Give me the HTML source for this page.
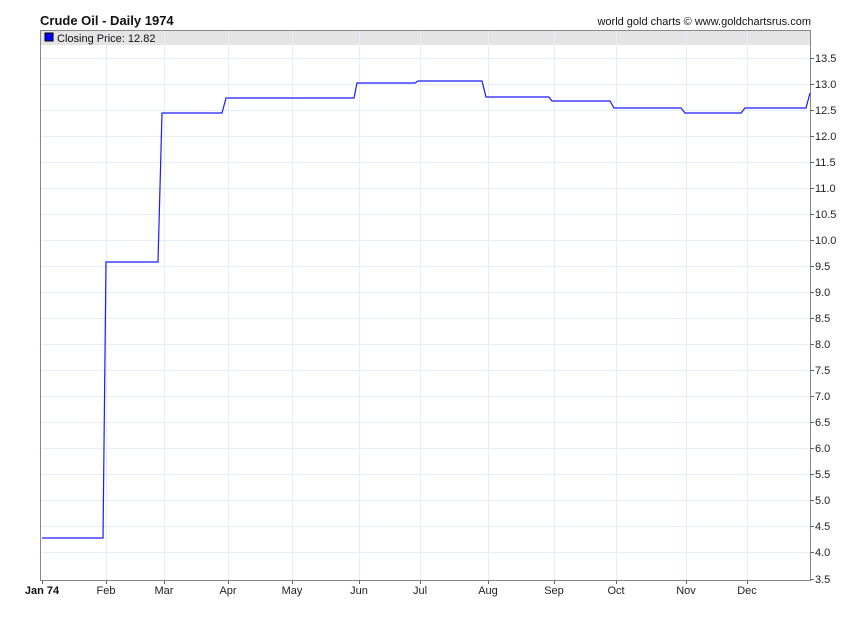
<!DOCTYPE html>
<html><head><style>
body{margin:0;background:#fff;width:850px;height:616px;overflow:hidden;font-family:"Liberation Sans",Arial,sans-serif}
</style></head><body>
<svg width="850" height="616" xmlns="http://www.w3.org/2000/svg" font-family="Liberation Sans, Arial, sans-serif">
<text x="40" y="25" font-size="13" font-weight="bold" fill="#111">Crude Oil - Daily 1974</text>
<text x="811" y="25" font-size="11" fill="#111" text-anchor="end">world gold charts © www.goldchartsrus.com</text>
<rect x="41" y="30" width="769" height="15" fill="#e4e4e4"/>
<g stroke="#e3eef9" stroke-width="1" fill="none">
<path d="M41 58.5H810M41 84.5H810M41 110.5H810M41 136.5H810M41 162.5H810M41 188.5H810M41 214.5H810M41 240.5H810M41 266.5H810M41 292.5H810M41 318.5H810M41 344.5H810M41 370.5H810M41 396.5H810M41 422.5H810M41 448.5H810M41 474.5H810M41 500.5H810M41 526.5H810M41 552.5H810"/>
<path d="M106.5 30V580M164.5 30V580M228.5 30V580M292.5 30V580M359.5 30V580M420.5 30V580M488.5 30V580M554.5 30V580M616.5 30V580M686.5 30V580M747.5 30V580"/>
</g>
<path d="M40.5 30.5H810.5V580.5H40.5Z" fill="none" stroke="#888"/>
<g stroke="#666"><path d="M810 58.5h4M810 84.5h4M810 110.5h4M810 136.5h4M810 162.5h4M810 188.5h4M810 214.5h4M810 240.5h4M810 266.5h4M810 292.5h4M810 318.5h4M810 344.5h4M810 370.5h4M810 396.5h4M810 422.5h4M810 448.5h4M810 474.5h4M810 500.5h4M810 526.5h4M810 552.5h4M810 579.5h4"/>
<path d="M42.5 580v4M106.5 580v4M164.5 580v4M228.5 580v4M292.5 580v4M359.5 580v4M420.5 580v4M488.5 580v4M554.5 580v4M616.5 580v4M686.5 580v4M747.5 580v4"/></g>
<rect x="45" y="33" width="8" height="8" fill="#0000ff" stroke="#000" stroke-width="1"/>
<text x="57" y="42" font-size="11" fill="#111">Closing Price: 12.82</text>
<g font-size="11" fill="#222">
<text x="815" y="62">13.5</text><text x="815" y="88">13.0</text><text x="815" y="114">12.5</text><text x="815" y="140">12.0</text><text x="815" y="166">11.5</text><text x="815" y="192">11.0</text><text x="815" y="218">10.5</text><text x="815" y="244">10.0</text><text x="815" y="270">9.5</text><text x="815" y="296">9.0</text><text x="815" y="322">8.5</text><text x="815" y="348">8.0</text><text x="815" y="374">7.5</text><text x="815" y="400">7.0</text><text x="815" y="426">6.5</text><text x="815" y="452">6.0</text><text x="815" y="478">5.5</text><text x="815" y="504">5.0</text><text x="815" y="530">4.5</text><text x="815" y="556">4.0</text><text x="815" y="583">3.5</text>
</g>
<g font-size="11" fill="#222" text-anchor="middle">
<text x="42" y="594" font-weight="bold" fill="#111">Jan 74</text><text x="106" y="594">Feb</text><text x="164" y="594">Mar</text><text x="228" y="594">Apr</text><text x="292" y="594">May</text><text x="359" y="594">Jun</text><text x="420" y="594">Jul</text><text x="488" y="594">Aug</text><text x="554" y="594">Sep</text><text x="616" y="594">Oct</text><text x="686" y="594">Nov</text><text x="747" y="594">Dec</text>
</g>
<polyline fill="none" stroke="#1a1aff" stroke-width="1.2" points="42,538 103,538 106,262 158,262 162,113 222,113 226,98 354,98 357,83 415,83 418,81 482,81 486,97 549,97 552,101 610,101 614,108 681,108 685,113 741,113 745,108 806,108 810,93"/>
</svg>
</body></html>
